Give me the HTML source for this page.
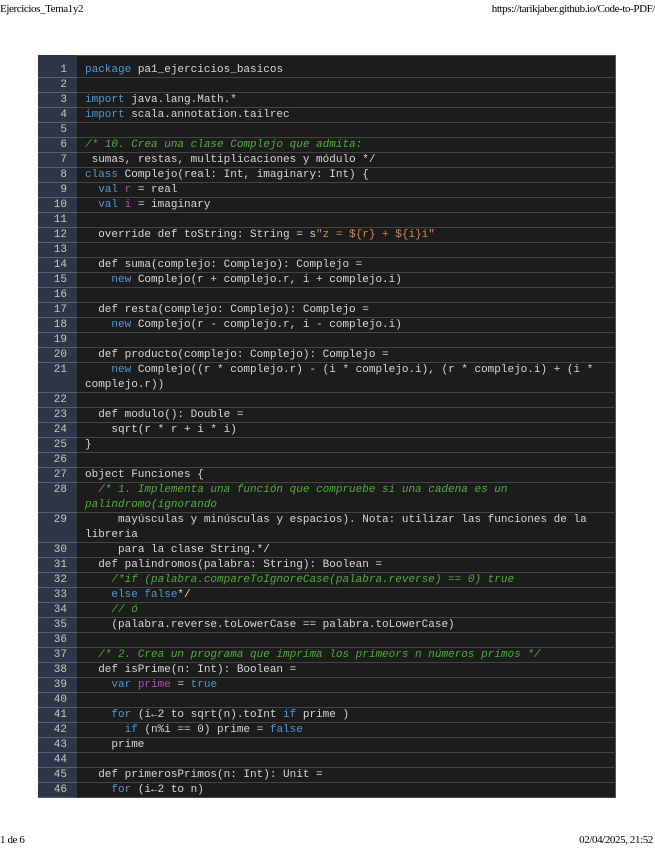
<!DOCTYPE html>
<html><head><meta charset="utf-8"><style>
html,body{margin:0;padding:0;background:#fff;width:655px;height:848px;overflow:hidden}
.hdr{position:absolute;font-family:"Liberation Serif",serif;font-size:11px;color:#000;top:3px;letter-spacing:-0.4px}
.box{position:absolute;left:38px;top:55px;width:578px;height:743px;background:#1c1c1c;border:1px solid #555;box-sizing:border-box}
table{position:absolute;left:38px;top:63px;width:578px;border-collapse:collapse;font-family:"Liberation Mono","DejaVu Sans Mono",monospace;font-size:11px;color:#d8d8d8}
td{line-height:15px;padding:0;vertical-align:top;border:none;background:linear-gradient(to top,#444 1px,transparent 1px)}
td.n{width:39px;background:linear-gradient(to top,#56607a 1px,#2e3547 1px);color:#c8c8c8;text-align:right;padding-right:10px;box-sizing:border-box}
td.c{padding-left:8px;white-space:pre-wrap;word-break:break-word}
.gut{position:absolute;left:38px;top:55px;width:39px;height:743px;background:#2e3547}
.k{color:#4c9ad2}.m{color:#b34fb3}.g{color:#4fae3a;font-style:italic}.s{color:#d08a5a}
</style></head><body>
<div class="hdr" style="left:0">Ejercicios_Tema1y2</div>
<div class="hdr" style="right:0">https://tarikjaber.github.io/Code-to-PDF/</div>
<div class="box"></div><div class="gut"></div>
<table>
<tr><td class="n">1</td><td class="c"><span class="k">package</span> pa1_ejercicios_basicos</td></tr>
<tr><td class="n">2</td><td class="c"></td></tr>
<tr><td class="n">3</td><td class="c"><span class="k">import</span> java.lang.Math.*</td></tr>
<tr><td class="n">4</td><td class="c"><span class="k">import</span> scala.annotation.tailrec</td></tr>
<tr><td class="n">5</td><td class="c"></td></tr>
<tr><td class="n">6</td><td class="c"><span class="g">/* 10. Crea una clase Complejo que admita:</span></td></tr>
<tr><td class="n">7</td><td class="c"> sumas, restas, multiplicaciones y módulo */</td></tr>
<tr><td class="n">8</td><td class="c"><span class="k">class</span> Complejo(real: Int, imaginary: Int) {</td></tr>
<tr><td class="n">9</td><td class="c">  <span class="k">val</span> <span class="m">r</span> = real</td></tr>
<tr><td class="n">10</td><td class="c">  <span class="k">val</span> <span class="m">i</span> = imaginary</td></tr>
<tr><td class="n">11</td><td class="c"></td></tr>
<tr><td class="n">12</td><td class="c">  override def toString: String = s<span class="s">"z = ${r} + ${i}i"</span></td></tr>
<tr><td class="n">13</td><td class="c"></td></tr>
<tr><td class="n">14</td><td class="c">  def suma(complejo: Complejo): Complejo =</td></tr>
<tr><td class="n">15</td><td class="c">    <span class="k">new</span> Complejo(r + complejo.r, i + complejo.i)</td></tr>
<tr><td class="n">16</td><td class="c"></td></tr>
<tr><td class="n">17</td><td class="c">  def resta(complejo: Complejo): Complejo =</td></tr>
<tr><td class="n">18</td><td class="c">    <span class="k">new</span> Complejo(r - complejo.r, i - complejo.i)</td></tr>
<tr><td class="n">19</td><td class="c"></td></tr>
<tr><td class="n">20</td><td class="c">  def producto(complejo: Complejo): Complejo =</td></tr>
<tr><td class="n">21</td><td class="c">    <span class="k">new</span> Complejo((r * complejo.r) - (i * complejo.i), (r * complejo.i) + (i *
complejo.r))</td></tr>
<tr><td class="n">22</td><td class="c"></td></tr>
<tr><td class="n">23</td><td class="c">  def modulo(): Double =</td></tr>
<tr><td class="n">24</td><td class="c">    sqrt(r * r + i * i)</td></tr>
<tr><td class="n">25</td><td class="c">}</td></tr>
<tr><td class="n">26</td><td class="c"></td></tr>
<tr><td class="n">27</td><td class="c">object Funciones {</td></tr>
<tr><td class="n">28</td><td class="c"><span class="g">  /* 1. Implementa una función que compruebe si una cadena es un
palindromo(ignorando</span></td></tr>
<tr><td class="n">29</td><td class="c">     mayúsculas y minúsculas y espacios). Nota: utilizar las funciones de la
libreria</td></tr>
<tr><td class="n">30</td><td class="c">     para la clase String.*/</td></tr>
<tr><td class="n">31</td><td class="c">  def palindromos(palabra: String): Boolean =</td></tr>
<tr><td class="n">32</td><td class="c">    <span class="g">/*if (palabra.compareToIgnoreCase(palabra.reverse) == 0) true</span></td></tr>
<tr><td class="n">33</td><td class="c">    <span class="k">else false</span>*/</td></tr>
<tr><td class="n">34</td><td class="c">    <span class="g">// ó</span></td></tr>
<tr><td class="n">35</td><td class="c">    (palabra.reverse.toLowerCase == palabra.toLowerCase)</td></tr>
<tr><td class="n">36</td><td class="c"></td></tr>
<tr><td class="n">37</td><td class="c">  <span class="g">/* 2. Crea un programa que imprima los primeors n números primos */</span></td></tr>
<tr><td class="n">38</td><td class="c">  def isPrime(n: Int): Boolean =</td></tr>
<tr><td class="n">39</td><td class="c">    <span class="k">var</span> <span class="m">prime</span> = <span class="k">true</span></td></tr>
<tr><td class="n">40</td><td class="c"></td></tr>
<tr><td class="n">41</td><td class="c">    <span class="k">for</span> (i←2 to sqrt(n).toInt <span class="k">if</span> prime )</td></tr>
<tr><td class="n">42</td><td class="c">      <span class="k">if</span> (n%i == 0) prime = <span class="k">false</span></td></tr>
<tr><td class="n">43</td><td class="c">    prime</td></tr>
<tr><td class="n">44</td><td class="c"></td></tr>
<tr><td class="n">45</td><td class="c">  def primerosPrimos(n: Int): Unit =</td></tr>
<tr><td class="n">46</td><td class="c">    <span class="k">for</span> (i←2 to n)</td></tr>
</table>
<div class="hdr" style="left:0;top:834px">1 de 6</div>
<div class="hdr" style="right:2px;top:834px">02/04/2025, 21:52</div>
</body></html>
